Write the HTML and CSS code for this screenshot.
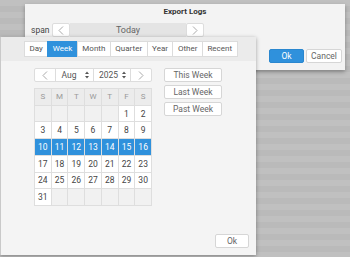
FILE: index.html
```html
<!DOCTYPE html>
<html>
<head>
<meta charset="utf-8">
<link rel="stylesheet" href="styles.css">
</head>
<body>
<div class="desk">
  <div class="export">
    <div class="title">Export Logs</div>
    <div class="span-row">
      <span class="lbl">span</span>
      <div class="range">
        <div class="arrow"><svg width="6" height="9" viewBox="0 0 6 9"><polyline points="5,0.5 1,4.5 5,8.5" fill="none" stroke="#aaa" stroke-width="1"/></svg></div>
        <div class="range-val">Today</div>
        <div class="arrow"><svg width="6" height="9" viewBox="0 0 6 9"><polyline points="1,0.5 5,4.5 1,8.5" fill="none" stroke="#aaa" stroke-width="1"/></svg></div>
      </div>
    </div>
    <div class="actions">
      <div class="btn primary">Ok</div>
      <div class="btn cancel">Cancel</div>
    </div>
  </div>

  <div class="popup">
    <div class="tabs">
      <div class="tab">Day</div>
      <div class="tab active">Week</div>
      <div class="tab">Month</div>
      <div class="tab">Quarter</div>
      <div class="tab">Year</div>
      <div class="tab">Other</div>
      <div class="tab">Recent</div>
    </div>
    <div class="pbody">
      <div class="cal">
        <div class="nav">
          <div class="nbtn"><svg width="6" height="9" viewBox="0 0 6 9"><polyline points="5,0.5 1,4.5 5,8.5" fill="none" stroke="#aaa" stroke-width="1"/></svg></div>
          <div class="sel month"><span>Aug</span><svg width="4" height="8" viewBox="0 0 4 8"><polygon points="0,3 2,0.5 4,3" fill="#555"/><polygon points="0,5 2,7.5 4,5" fill="#555"/></svg></div>
          <div class="sel year"><span>2025</span><svg width="4" height="8" viewBox="0 0 4 8"><polygon points="0,3 2,0.5 4,3" fill="#555"/><polygon points="0,5 2,7.5 4,5" fill="#555"/></svg></div>
          <div class="nbtn"><svg width="6" height="9" viewBox="0 0 6 9"><polyline points="1,0.5 5,4.5 1,8.5" fill="none" stroke="#aaa" stroke-width="1"/></svg></div>
        </div>
        <div class="grid">
          <div class="dh">S</div><div class="dh">M</div><div class="dh">T</div><div class="dh">W</div><div class="dh">T</div><div class="dh">F</div><div class="dh">S</div>
          <div class="d e"></div><div class="d e"></div><div class="d e"></div><div class="d e"></div><div class="d e"></div><div class="d">1</div><div class="d">2</div>
          <div class="d">3</div><div class="d">4</div><div class="d">5</div><div class="d">6</div><div class="d">7</div><div class="d">8</div><div class="d">9</div>
          <div class="d s">10</div><div class="d s">11</div><div class="d s">12</div><div class="d s">13</div><div class="d s">14</div><div class="d s">15</div><div class="d s">16</div>
          <div class="d">17</div><div class="d">18</div><div class="d">19</div><div class="d">20</div><div class="d">21</div><div class="d">22</div><div class="d">23</div>
          <div class="d">24</div><div class="d">25</div><div class="d">26</div><div class="d">27</div><div class="d">28</div><div class="d">29</div><div class="d">30</div>
          <div class="d">31</div><div class="d e"></div><div class="d e"></div><div class="d e"></div><div class="d e"></div><div class="d e"></div><div class="d e"></div>
        </div>
      </div>
      <div class="quick">
        <div class="qbtn">This Week</div>
        <div class="qbtn">Last Week</div>
        <div class="qbtn">Past Week</div>
      </div>
    </div>
    <div class="pfoot">
      <div class="btn okp">Ok</div>
    </div>
  </div>
</div>
</body>
</html>
```

FILE: styles.css
```css
* { box-sizing: border-box; }
html, body { margin: 0; padding: 0; }
body {
  font-family: Roboto, "Liberation Sans", sans-serif;
  font-size: 8px;
  color: #555;
}
.desk {
  position: relative;
  width: 350px;
  height: 257px;
  overflow: hidden;
  background: repeating-linear-gradient(180deg, #c0c0c0 0 6px, #bababa 6px 12px);
}
.export {
  position: absolute;
  left: 25px;
  top: 4px;
  width: 320px;
  height: 66px;
  background: #f3f3f3;
  box-shadow: 0 2px 4px rgba(0,0,0,0.3);
  display: flex;
  flex-direction: column;
}
.title {
  height: 15px;
  line-height: 15px;
  text-align: center;
  font-weight: bold;
  font-size: 8px;
  color: #333;
}
.span-row {
  margin-top: 4px;
  display: flex;
  align-items: center;
  padding-left: 6px;
  height: 14px;
}
.lbl { width: 21px; color: #444; font-size: 8.5px; }
.range {
  display: flex;
  height: 14px;
  width: 152px;
}
.arrow {
  width: 18px;
  height: 14px;
  background: #fff;
  border: 1px solid #ddd;
  border-radius: 2px;
  display: flex;
  align-items: center;
  justify-content: center;
}
.range-val {
  flex: 1;
  background: #e4e4e4;
  text-align: center;
  line-height: 14px;
  color: #666;
  font-size: 9px;
}
.actions {
  margin-top: 12px;
  display: flex;
  justify-content: flex-end;
  gap: 2px;
  padding-right: 3px;
}
.btn {
  height: 14px;
  line-height: 12px;
  text-align: center;
  border: 1px solid #d6d6d6;
  border-radius: 2px;
  background: #fff;
  color: #666;
  font-size: 8.5px;
}
.btn.primary {
  width: 35px;
  background: #2f91dc;
  border-color: #2a87cf;
  color: #fff;
}
.btn.cancel { width: 36px; }

.popup {
  position: absolute;
  left: 0;
  top: 37px;
  width: 256px;
  height: 218px;
  background: #f4f4f4;
  border-left: 1px solid #c9c9c9;
  box-shadow: 0 1px 4px rgba(0,0,0,0.35);
  display: flex;
  flex-direction: column;
}
.tabs {
  height: 24px;
  background: #ebebeb;
  padding: 4px 0 0 23px;
  display: flex;
}
.tab {
  height: 16px;
  line-height: 14px;
  padding: 0 4.5px;
  background: #fff;
  border: 1px solid #dcdcdc;
  margin-left: -1px;
  color: #555;
  font-size: 8px;
}
.tab:first-child { margin-left: 0; }
.tab.active {
  background: #2f91dc;
  border-color: #2f91dc;
  color: #fff;
}
.pbody {
  display: flex;
  padding: 7px 0 0 33px;
  gap: 12px;
}
.cal { width: 118px; display: flex; flex-direction: column; gap: 6px; }
.nav {
  display: flex;
  height: 14px;
  background: #fff;
  border: 1px solid #ddd;
  border-radius: 2px;
}
.nbtn {
  width: 20px;
  display: flex;
  align-items: center;
  justify-content: center;
}
.sel {
  width: 39px;
  border-left: 1px solid #ddd;
  display: flex;
  align-items: center;
  justify-content: space-between;
  padding: 0 4px 0 6px;
  font-size: 8.5px;
  color: #555;
}
.sel.year { border-right: 1px solid #ddd; padding-left: 5px; }
.grid {
  display: grid;
  grid-template-columns: repeat(7, 1fr);
  grid-template-rows: repeat(7, 1fr);
  width: 118px;
  height: 118px;
  gap: 1px;
  padding: 1px;
  background: #dedede;
}
.dh, .d {
  display: flex;
  align-items: center;
  justify-content: center;
  font-size: 8.5px;
}
.dh { background: #ececec; color: #999; font-size: 8px; }
.d { background: #fff; color: #444; }
.d.e { background: #f1f1f1; }
.d.s { background: #2f91dc; color: #fff; }
.quick { display: flex; flex-direction: column; gap: 3px; }
.qbtn {
  width: 58px;
  height: 14px;
  line-height: 12px;
  text-align: center;
  background: #fff;
  border: 1px solid #d6d6d6;
  border-radius: 2px;
  color: #666;
  font-size: 8.5px;
}
.pfoot {
  margin-top: auto;
  display: flex;
  justify-content: flex-end;
  padding: 0 7px 7px 0;
}
.okp { width: 34px; }
```
